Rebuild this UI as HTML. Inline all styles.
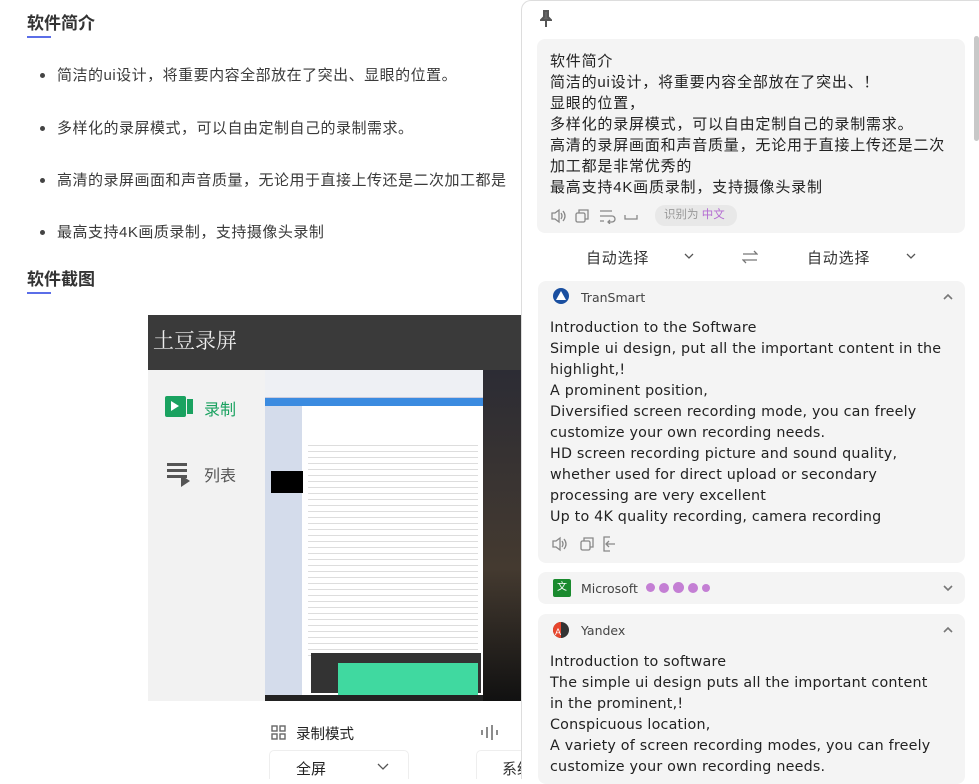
<!DOCTYPE html>
<html><head><meta charset="utf-8"><style>
*{margin:0;padding:0;box-sizing:border-box}
body{width:979px;height:779px;overflow:hidden;background:#fff;font-family:"Liberation Sans","Noto Sans CJK SC",sans-serif;position:relative;color:#333}
.h{position:absolute;left:27px;font-size:17px;font-weight:bold;color:#333}
.h:after{content:"";position:absolute;left:0;top:27px;width:24px;height:2px;background:#5b6ee8}
.li{position:absolute;left:57px;font-size:15px;letter-spacing:.5px;color:#3a3a3a;white-space:nowrap}
.li:before{content:"";position:absolute;left:-17px;top:9px;width:5px;height:5px;border-radius:50%;background:#444}
.panel{position:absolute;left:521px;top:0;width:458px;height:779px;background:#fff;border-left:1px solid #ddd;border-top:1px solid #ddd;border-top-left-radius:10px}
.box{position:absolute;background:#f4f4f4;border-radius:8px}
.t{font-size:15px;line-height:21px;letter-spacing:.8px;color:#222;white-space:nowrap}
.en{line-height:21px;color:#222;white-space:nowrap;font-family:"DejaVu Sans","Liberation Sans",sans-serif;font-size:14.3px;letter-spacing:.2px}
.nm{position:absolute;left:43px;font-size:12.5px;color:#444;font-family:"DejaVu Sans",sans-serif}
</style></head><body>
<div class="h" style="top:9px">软件简介</div>
<div class="li" style="top:64px">简洁的ui设计，将重要内容全部放在了突出、显眼的位置。</div>
<div class="li" style="top:117px">多样化的录屏模式，可以自由定制自己的录制需求。</div>
<div class="li" style="top:169px">高清的录屏画面和声音质量，无论用于直接上传还是二次加工都是</div>
<div class="li" style="top:221px">最高支持4K画质录制，支持摄像头录制</div>
<div class="h" style="top:265px">软件截图</div>

<div style="position:absolute;left:148px;top:315px;width:373px;height:464px;background:#fafafa;overflow:hidden">
 <div style="position:absolute;left:0;top:0;width:373px;height:55px;background:#3a3a3a;color:#eee;font-family:'Noto Serif CJK SC',serif;font-size:21px;line-height:50px;padding-left:5px">土豆录屏</div>
 <div style="position:absolute;left:0;top:55px;width:117px;height:409px;background:#f2f2f2"></div>
 <div style="position:absolute;left:17px;top:81px;width:21px;height:21px;background:#1aa260;border-radius:2px"></div>
 <div style="position:absolute;left:39px;top:84px;width:6px;height:15px;background:#1aa260"></div>
 <div style="position:absolute;left:23px;top:86px;width:0;height:0;border-left:8px solid #fff;border-top:5px solid transparent;border-bottom:5px solid transparent"></div>
 <div style="position:absolute;left:56px;top:81px;font-size:16px;color:#1aa260">录制</div>
 <div style="position:absolute;left:19px;top:148px;width:20px;height:3px;background:#555;box-shadow:0 6px 0 #555,0 12px 0 #555"></div>
 <div style="position:absolute;left:33px;top:160px;border-left:9px solid #555;border-top:6px solid transparent;border-bottom:6px solid transparent"></div>
 <div style="position:absolute;left:56px;top:147px;font-size:16px;color:#555">列表</div>
 <div style="position:absolute;left:117px;top:55px;width:221px;height:331px;background:#fff">
  <div style="height:28px;background:#eef0f4;border-bottom:1px solid #ccd"></div>
  <div style="height:8px;background:#3b8be0"></div>
  <div style="position:absolute;left:0;top:36px;width:37px;height:295px;background:#d4dceb"></div>
  <div style="position:absolute;left:6px;top:101px;width:32px;height:22px;background:#000"></div>
  <div style="position:absolute;left:43px;top:70px;width:170px;height:220px;background:repeating-linear-gradient(#fff 0 5px,#ddd 5px 6px)"></div>
  <div style="position:absolute;left:46px;top:283px;width:170px;height:40px;background:#333"></div>
  <div style="position:absolute;left:73px;top:293px;width:140px;height:38px;background:#40d9a0"></div>
  <div style="position:absolute;left:0;top:325px;width:221px;height:6px;background:#222"></div>
 </div>
 <div style="position:absolute;left:335px;top:55px;width:38px;height:331px;background:linear-gradient(#2c2c34,#443a30 60%,#111)"></div>
 <div style="position:absolute;left:0;top:386px;width:373px;height:78px;background:#fff"></div>
 <svg style="position:absolute;left:123px;top:410px" width="15" height="15" viewBox="0 0 15 15" fill="none" stroke="#666" stroke-width="1.4"><rect x="1" y="1" width="5" height="5"/><rect x="9" y="1" width="5" height="5"/><rect x="1" y="9" width="5" height="5"/><rect x="9" y="9" width="5" height="5"/></svg>
 <div style="position:absolute;left:148px;top:408px;font-size:14.5px;color:#222">录制模式</div>
 <svg style="position:absolute;left:332px;top:410px" width="20" height="15" viewBox="0 0 20 15" stroke="#666" stroke-width="1.5"><path d="M2 5v5M7 2v11M12 0v15M17 5v5"/></svg>
 <div style="position:absolute;left:121px;top:435px;width:140px;height:35px;border:1px solid #eee;border-radius:5px;background:#fff;font-size:15px;color:#222;padding:7px 0 0 26px">全屏<svg style="position:absolute;left:107px;top:12px" width="12" height="8" viewBox="0 0 12 8"><path d="M1 1l5 5 5-5" stroke="#555" fill="none" stroke-width="1.3"/></svg></div>
 <div style="position:absolute;left:328px;top:435px;width:60px;height:35px;border:1px solid #eee;border-radius:5px;background:#fff;font-size:15px;padding:7px 0 0 25px">系统</div>
</div>

<div class="panel">
 <svg style="position:absolute;left:18px;top:9px" width="12" height="18" viewBox="0 0 12 18"><path d="M3 1h6M4 1v6L1 10h10L8 7V1M6 10v7" stroke="#555" stroke-width="2" fill="#666"/></svg>
 <div style="position:absolute;left:452px;top:35px;width:5px;height:105px;background:#c8c8c8;border-radius:3px"></div>
 <div class="box" style="left:15px;top:38px;width:428px;height:194px">
  <div class="t" style="position:absolute;left:13px;top:12px">软件简介<br>简洁的ui设计，将重要内容全部放在了突出、！<br>显眼的位置，<br>多样化的录屏模式，可以自由定制自己的录制需求。<br>高清的录屏画面和声音质量，无论用于直接上传还是二次<br>加工都是非常优秀的<br>最高支持4K画质录制，支持摄像头录制</div>
  <svg style="position:absolute;left:14px;top:169px" width="105" height="16" viewBox="0 0 105 16" fill="none" stroke="#888" stroke-width="1.3">
   <path d="M1 5h3l4-3v12l-4-3H1zM10 5q2 3 0 6M12 3q4 5 0 10"/>
   <rect x="25" y="5" width="9" height="9" rx="1.5"/><path d="M28 5V2h9v9h-3"/>
   <path d="M49 3h12M49 8h12a3 3 0 0 1 0 6h-4M59 12l-2 2 2 2M49 13h4"/>
   <path d="M74 7v4h12V7"/>
  </svg>
  <div style="position:absolute;left:118px;top:166px;width:82px;height:21px;background:#e8e8e8;border-radius:10px;font-size:11.5px;color:#999;line-height:21px;padding-left:9px">识别为 <span style="color:#b46cd2">中文</span></div>
 </div>
 <div style="position:absolute;left:64px;top:246px;font-size:15px;color:#333;letter-spacing:.8px">自动选择</div>
 <svg style="position:absolute;left:162px;top:252px" width="10" height="7" viewBox="0 0 10 7"><path d="M1 1l4 4 4-4" stroke="#555" fill="none" stroke-width="1.3"/></svg>
 <svg style="position:absolute;left:220px;top:249px" width="16" height="14" viewBox="0 0 16 14" fill="none" stroke="#777" stroke-width="1.3"><path d="M1 4h14l-3-3M15 10H1l3 3"/></svg>
 <div style="position:absolute;left:285px;top:246px;font-size:15px;color:#333;letter-spacing:.8px">自动选择</div>
 <svg style="position:absolute;left:384px;top:252px" width="10" height="7" viewBox="0 0 10 7"><path d="M1 1l4 4 4-4" stroke="#555" fill="none" stroke-width="1.3"/></svg>

 <div class="box" style="left:16px;top:280px;width:427px;height:282px">
  <svg style="position:absolute;left:14px;top:6px" width="18" height="18" viewBox="0 0 18 18"><circle cx="9" cy="9" r="8" fill="#1a4fa0"/><path d="M9 4L4 13h10z" fill="#fff"/></svg>
  <div class="nm" style="top:9px">TranSmart</div>
  <svg style="position:absolute;right:12px;top:12px" width="10" height="7" viewBox="0 0 10 7"><path d="M1 6l4-4 4 4" stroke="#777" fill="none" stroke-width="1.6"/></svg>
  <div class="en" style="position:absolute;left:12px;top:37px">Introduction to the Software<br>Simple ui design, put all the important content in the<br>highlight,!<br>A prominent position,<br>Diversified screen recording mode, you can freely<br>customize your own recording needs.<br>HD screen recording picture and sound quality,<br>whether used for direct upload or secondary<br>processing are very excellent<br>Up to 4K quality recording, camera recording</div>
  <svg style="position:absolute;left:14px;top:255px" width="70" height="16" viewBox="0 0 70 16" fill="none" stroke="#888" stroke-width="1.3">
   <path d="M1 5h3l4-3v12l-4-3H1zM10 5q2 3 0 6M12 3q4 5 0 10"/>
   <rect x="29" y="5" width="9" height="9" rx="1.5"/><path d="M32 5V2h9v9h-3"/>
   <path d="M58 1h-6v14h6M54 8h9M57 5l-3 3 3 3"/>
  </svg>
 </div>
 <div class="box" style="left:16px;top:571px;width:427px;height:32px">
  <div style="position:absolute;left:15px;top:7px;width:18px;height:18px;background:#1a8a2e;border-radius:2px;color:#fff;font-size:10px;line-height:18px;text-align:center">文</div>
  <div class="nm" style="top:9px">Microsoft</div>
  <div style="position:absolute;left:108px;top:10px;display:flex;gap:4px;align-items:center"><i style="width:9px;height:9px;border-radius:50%;background:#c47fd4"></i><i style="width:10px;height:10px;border-radius:50%;background:#c47fd4"></i><i style="width:11px;height:11px;border-radius:50%;background:#c47fd4"></i><i style="width:10px;height:10px;border-radius:50%;background:#c47fd4"></i><i style="width:8px;height:8px;border-radius:50%;background:#c47fd4"></i></div>
  <svg style="position:absolute;right:12px;top:13px" width="10" height="7" viewBox="0 0 10 7"><path d="M1 1l4 4 4-4" stroke="#777" fill="none" stroke-width="1.6"/></svg>
 </div>
 <div class="box" style="left:16px;top:613px;width:427px;height:170px">
  <svg style="position:absolute;left:14px;top:7px" width="18" height="18" viewBox="0 0 18 18"><circle cx="9" cy="9" r="8" fill="#333"/><path d="M9 1A8 8 0 0 0 9 17z" fill="#e8452c"/><text x="3" y="14" font-size="9" fill="#fff" font-family="Liberation Sans">A</text></svg>
  <div class="nm" style="top:9px">Yandex</div>
  <svg style="position:absolute;right:12px;top:12px" width="10" height="7" viewBox="0 0 10 7"><path d="M1 6l4-4 4 4" stroke="#777" fill="none" stroke-width="1.6"/></svg>
  <div class="en" style="position:absolute;left:12px;top:38px">Introduction to software<br>The simple ui design puts all the important content<br>in the prominent,!<br>Conspicuous location,<br>A variety of screen recording modes, you can freely<br>customize your own recording needs.</div>
 </div>
</div>
</body></html>
